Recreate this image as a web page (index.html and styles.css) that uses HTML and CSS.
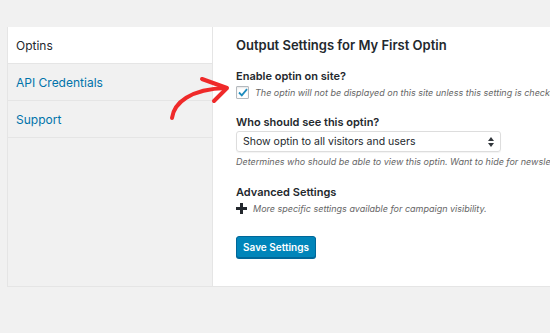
FILE: index.html
```html
<!DOCTYPE html>
<html lang="en">
<head>
    <meta charset="UTF-8">
    <meta name="viewport" content="width=device-width, initial-scale=1.0">
    <title>Optin Settings</title>
    <link rel="stylesheet" href="styles.css">
</head>
<body>
<div class="settings-wrap">
    <ul class="tabs">
        <li class="tab active">Optins</li>
        <li class="tab"><a href="#">API Credentials</a></li>
        <li class="tab"><a href="#">Support</a></li>
    </ul>
    <div class="panel">
        <h2>Output Settings for My First Optin</h2>

        <div class="field">
            <div class="field-label">Enable optin on site?</div>
            <label class="check-row">
                <span class="checkbox">
                    <svg width="10" height="9" viewBox="0 0 10 9"><path d="M1 4.5 L3.8 7.3 L9 1.2" fill="none" stroke="#1e8cbe" stroke-width="1.8"/></svg>
                </span>
                <span class="desc">The optin will not be displayed on this site unless this setting is checked.</span>
            </label>
        </div>

        <div class="field">
            <div class="field-label">Who should see this optin?</div>
            <div class="select">
                <span>Show optin to all visitors and users</span>
                <svg width="6" height="10" viewBox="0 0 6 10"><path d="M3 0 L6 4 L0 4 Z M0 6 L6 6 L3 10 Z" fill="#32373c"/></svg>
            </div>
            <div class="desc under">Determines who should be able to view this optin. Want to hide for newsletter subscribers?</div>
        </div>

        <div class="field advanced">
            <div class="field-label">Advanced Settings</div>
            <div class="check-row">
                <span class="plus"></span>
                <span class="desc">More specific settings available for campaign visibility.</span>
            </div>
        </div>

        <button type="button" class="save-btn">Save Settings</button>
    </div>

    <svg class="arrow" width="70" height="50" viewBox="0 0 70 50">
        <path d="M4 46 C 6 31, 22 17, 58 16" fill="none" stroke="#ef2a2a" stroke-width="4" stroke-linecap="round"/>
        <path d="M34 7 L59 16 L46 29" fill="none" stroke="#ef2a2a" stroke-width="4" stroke-linecap="round" stroke-linejoin="round"/>
    </svg>
</div>
</body>
</html>
```

FILE: styles.css
```css
body {
    margin: 0;
    background-color: #f1f1f1;
    font-family: "Inter", "Liberation Sans", sans-serif;
    color: #23282d;
    overflow: hidden;
    height: 333px;
}

.settings-wrap {
    position: relative;
    display: flex;
    margin: 27px 0 0 7px;
    width: 640px;
    height: 259px;
    border: 1px solid #e5e5e5;
    border-top: none;
}

.tabs {
    list-style: none;
    flex-shrink: 0;
    margin: 0;
    padding: 0;
    width: 204px;
    border-right: 1px solid #e5e5e5;
    background: #f1f1f1;
}

.tab {
    height: 36px;
    line-height: 38px;
    padding-left: 8px;
    font-size: 12px;
    border-bottom: 1px solid #e5e5e5;
}

.tab.active {
    background: #fff;
}

.tab a {
    color: #0073aa;
    text-decoration: none;
}

.panel {
    flex: 1;
    background: #fff;
    padding: 9px 23px;
}

h2 {
    font-size: 13px;
    font-weight: 600;
    line-height: 18px;
    margin: 0 0 14px;
}

.field {
    margin-bottom: 14px;
}

.field.advanced {
    margin-top: 15px;
    margin-bottom: 14px;
}

.field-label {
    font-size: 11px;
    font-weight: 600;
    line-height: 16px;
}

.check-row {
    display: flex;
    align-items: center;
    height: 16px;
    gap: 6px;
}

.checkbox {
    width: 11px;
    height: 11px;
    border: 1px solid #b4b9be;
    border-radius: 1px;
    background: #fff;
    display: flex;
    align-items: center;
    justify-content: center;
    box-shadow: inset 0 1px 2px rgba(0, 0, 0, 0.1);
}

.desc {
    font-size: 9px;
    font-style: italic;
    color: #666;
    white-space: nowrap;
}

.desc.under {
    display: block;
    margin-top: 2px;
    line-height: 15px;
}

.select {
    margin-top: 1px;
    width: 251px;
    height: 19px;
    border: 1px solid #ddd;
    border-radius: 3px;
    padding: 0 6px;
    display: flex;
    align-items: center;
    justify-content: space-between;
    font-size: 10.5px;
    box-shadow: 0 1px 1px rgba(0, 0, 0, 0.05);
}

.plus {
    position: relative;
    width: 11px;
    height: 11px;
}

.plus::before,
.plus::after {
    content: "";
    position: absolute;
    background: #23282d;
}

.plus::before {
    left: 0;
    top: 4px;
    width: 11px;
    height: 3px;
}

.plus::after {
    left: 4px;
    top: 0;
    width: 3px;
    height: 11px;
}

.save-btn {
    margin-top: 6px;
    width: 80px;
    height: 22px;
    padding: 0;
    background: #0085ba;
    border: 1px solid #006799;
    border-radius: 3px;
    color: #fff;
    font-family: inherit;
    font-size: 10px;
    font-weight: 600;
    box-shadow: 0 1px 0 #006799;
}

.arrow {
    position: absolute;
    left: 160px;
    top: 45px;
}
```
